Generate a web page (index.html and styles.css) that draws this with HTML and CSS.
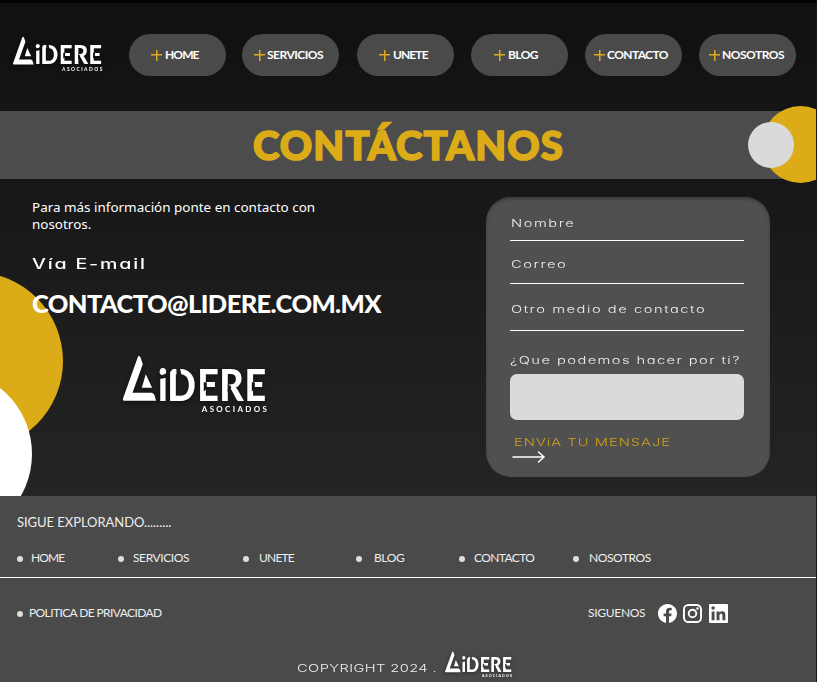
FILE: index.html
```html
<!DOCTYPE html>
<html lang="es">
<head>
<meta charset="utf-8">
<title>Lidere Asociados - Contáctanos</title>
<link rel="stylesheet" href="styles.css">
</head>
<body>
<svg class="defs" width="0" height="0" aria-hidden="true">
  <defs>
    <mask id="stencil" maskUnits="userSpaceOnUse" x="0" y="0" width="440" height="175">
      <rect width="440" height="175" fill="#fff"/>
      <path d="M144 36H160L144 54ZM165 36H175L182 64H166ZM110 66L138 54V68L120 72H110ZM248 82H257L257 102L248 110ZM320 86L331 96L327 112H320ZM393 82H402L402 102L393 110Z" fill="#000"/>
    </mask>
    <symbol id="logo" viewBox="0 0 440 175">
      <path d="M4 132L49 6Q53 0 57 7L64 28L33 114H91Q96 115 99 121L104 138H8Q2 138 4 132Z"/>
      <path d="M73 58L92 99H61Z"/>
      <g mask="url(#stencil)">
        <text class="logo-word" x="110" y="138" textLength="326" lengthAdjust="spacingAndGlyphs">i<tspan dx="-2">D</tspan><tspan dx="4">E</tspan><tspan dx="2">R</tspan><tspan dx="2">E</tspan></text>
      </g>
      <text class="logo-sub" x="242" y="171" textLength="196">ASOCIADOS</text>
    </symbol>
  </defs>
</svg>

<header class="header">
  <svg class="logo logo-header"><use href="#logo"/></svg>
  <nav class="nav">
    <a class="pill home"><i class="plus"></i><span>HOME</span></a>
    <a class="pill servicios"><i class="plus"></i><span>SERVICIOS</span></a>
    <a class="pill unete"><i class="plus"></i><span>UNETE</span></a>
    <a class="pill blog"><i class="plus"></i><span>BLOG</span></a>
    <a class="pill contacto"><i class="plus"></i><span>CONTACTO</span></a>
    <a class="pill nosotros"><i class="plus"></i><span>NOSOTROS</span></a>
  </nav>
</header>

<section class="banner">
  <h1>CONTÁCTANOS</h1>
  <div class="dot-gold"></div>
  <div class="dot-grey"></div>
</section>

<main class="main">
  <div class="circle-gold"></div>
  <div class="circle-white"></div>
  <section class="info">
    <p class="lead">Para más información ponte en contacto con<br>nosotros.</p>
    <h2 class="via"><span>Vía E-mail</span></h2>
    <p class="email">CONTACTO@LIDERE.COM.MX</p>
    <svg class="logo logo-main"><use href="#logo"/></svg>
  </section>
  <form class="card">
    <label class="field name"><span>Nombre</span></label>
    <label class="field mail"><span>Correo</span></label>
    <label class="field other"><span>Otro medio de contacto</span></label>
    <label class="question"><span>¿Que podemos hacer por ti?</span></label>
    <div class="message"></div>
    <div class="send"><span>ENVíA TU MENSAJE</span></div>
    <svg class="arrow" viewBox="0 0 32 12"><path d="M0 6H31M25.5 1L31 6L25.5 11"/></svg>
  </form>
</main>

<footer class="footer">
  <h3>SIGUE EXPLORANDO.........</h3>
  <ul class="links">
    <li class="l-home"><span>HOME</span></li>
    <li class="l-servicios"><span>SERVICIOS</span></li>
    <li class="l-unete"><span>UNETE</span></li>
    <li class="l-blog"><span>BLOG</span></li>
    <li class="l-contacto"><span>CONTACTO</span></li>
    <li class="l-nosotros"><span>NOSOTROS</span></li>
  </ul>
  <div class="bottom">
    <div class="privacy"><span>POLITICA DE PRIVACIDAD</span></div>
    <div class="social">
      <span class="follow">SIGUENOS</span>
      <svg class="fb" viewBox="2 2 20 20"><path d="M12 2.04C6.5 2.04 2 6.53 2 12.06C2 17.06 5.66 21.21 10.44 21.96V14.96H7.9V12.06H10.44V9.85C10.44 7.34 11.93 5.96 14.22 5.96C15.31 5.96 16.45 6.15 16.45 6.15V8.62H15.19C13.95 8.62 13.56 9.39 13.56 10.18V12.06H16.34L15.89 14.96H13.56V21.96A10 10 0 0 0 22 12.06C22 6.53 17.5 2.04 12 2.04Z"/></svg>
      <svg class="ig" viewBox="2 2 20 20"><path d="M7.8 2H16.2C19.4 2 22 4.6 22 7.8V16.2A5.8 5.8 0 0 1 16.2 22H7.8C4.6 22 2 19.4 2 16.2V7.8A5.8 5.8 0 0 1 7.8 2M7.6 4A3.6 3.6 0 0 0 4 7.6V16.4C4 18.39 5.61 20 7.6 20H16.4A3.6 3.6 0 0 0 20 16.4V7.6C20 5.61 18.39 4 16.4 4H7.6M17.25 5.5A1.25 1.25 0 1 1 17.25 8A1.25 1.25 0 0 1 17.25 5.5M12 7A5 5 0 1 1 12 17A5 5 0 0 1 12 7M12 9A3 3 0 1 0 12 15A3 3 0 0 0 12 9Z"/></svg>
      <svg class="in" viewBox="3 3 18 18"><path fill-rule="evenodd" d="M4 3H20A1 1 0 0 1 21 4V20A1 1 0 0 1 20 21H4A1 1 0 0 1 3 20V4A1 1 0 0 1 4 3ZM18.5 18.5V13.2A3.26 3.26 0 0 0 15.24 9.94C14.39 9.94 13.4 10.46 12.92 11.24V10.13H10.13V18.5H12.92V13.57A1.4 1.4 0 0 1 15.71 13.57V18.5H18.5M6.88 8.56A1.68 1.68 0 1 0 6.88 5.2A1.68 1.68 0 0 0 6.88 8.56M8.27 18.5V10.13H5.5V18.5H8.27Z"/></svg>
    </div>
  </div>
  <div class="copy">
    <div class="copy-text"><span>COPYRIGHT 2024 .</span></div>
    <svg class="logo logo-footer"><use href="#logo"/></svg>
  </div>
</footer>
</body>
</html>
```
FILE: styles.css
```css
* { box-sizing: border-box; margin: 0; padding: 0; }

body {
  width: 817px;
  height: 682px;
  overflow: hidden;
  color: #fff;
  font-family: Lato, "Liberation Sans", sans-serif;
  background: linear-gradient(#101010, #171717 180px, #242424 496px);
  border-top: 3px solid #020202;
  border-right: 1px solid #151515;
}

.defs { position: absolute; }
.logo { display: block; fill: #fff; flex: none; }
.logo-word { font: 900 130px Lato, sans-serif; }
.logo-sub { font: 700 24px Lato, sans-serif; }

.header { display: flex; height: 108px; padding: 31px 0 0 12px; }
.logo-header { width: 91px; height: 36px; margin-top: 2px; filter: drop-shadow(0 1px 2px #0008); }
.nav { display: flex; margin-left: 26px; }
.pill {
  display: flex;
  align-items: center;
  width: 97px;
  height: 42px;
  border-radius: 21px;
  background: #4a4a4a;
  font-size: 12px;
  font-weight: 700;
  white-space: nowrap;
}
.plus {
  flex: none;
  width: 11px;
  height: 11px;
  margin-right: 3px;
  background:
    linear-gradient(#dba91d, #dba91d) center / 11px 1.5px no-repeat,
    linear-gradient(#dba91d, #dba91d) center / 1.5px 11px no-repeat;
}
.home { padding-left: 22px; }
.servicios { margin-left: 16px; padding-left: 12px; }
.unete { margin-left: 18px; padding-left: 22px; }
.blog { margin-left: 17px; padding-left: 23px; }
.contacto { margin-left: 17px; padding-left: 9px; }
.nosotros { margin-left: 17px; padding-left: 10px; }
.pill span { padding-bottom: 2px; letter-spacing: -.6px; }
.home span, .unete span { letter-spacing: -.9px; }
.servicios span, .nosotros span { margin-left: -1px; letter-spacing: -.5px; }
.contacto span { margin-left: -1px; }

.banner { position: relative; height: 68px; background: #4c4c4c; }
.banner h1 {
  padding-left: 253px;
  color: #dcac18;
  font-size: 40px;
  font-weight: 900;
  line-height: 68px;
  letter-spacing: 1.1px;
  -webkit-text-stroke: 1.6px #dcac18;
}
.dot-gold, .dot-grey { position: absolute; border-radius: 50%; }
.dot-gold { right: -23px; top: -5px; width: 77px; height: 77px; background: #dcac18; clip-path: inset(0 23px 0 0); }
.dot-grey { left: 748px; top: 11px; width: 46px; height: 46px; background: #dadada; }

.main { position: relative; display: flex; height: 317px; overflow: hidden; }
.circle-gold, .circle-white { position: absolute; border-radius: 50%; }
.circle-gold { left: -115px; top: 93px; width: 178px; height: 178px; background: #dcac18; }
.circle-white { left: -136px; top: 191px; width: 168px; height: 168px; background: #fff; }
.info { position: relative; width: 486px; padding: 20px 0 0 32px; }
.lead { font: 13.45px/17px "Noto Sans", sans-serif; white-space: nowrap; }
.via { height: 22px; margin-top: 20px; font: 500 14px/22px Inter, sans-serif; }
.via span, .field span, .question span, .send span, .copy-text span {
  display: inline-block;
  white-space: nowrap;
  transform: scaleX(1.4);
  transform-origin: left;
  font-feature-settings: "cv11", "ss03";
}
.via span { letter-spacing: 1.3px; }
.email { margin-top: 11px; font-size: 25.5px; font-weight: 900; line-height: 34px; letter-spacing: -.62px; }
.logo-main { width: 147px; height: 58px; margin: 35px 0 0 89px; filter: drop-shadow(0 2px 3px #0008); }

.card {
  width: 284px;
  height: 280px;
  margin-top: 18px;
  padding: 0 26px 0 24px;
  border-radius: 25px;
  background: #505050;
  box-shadow: inset 0 2px 3px #3c3c3c;
  color: #f0f0f0;
  font: 300 10.5px/16px Inter, sans-serif;
}
.field { display: flex; align-items: flex-end; padding: 0 0 8px 1px; border-bottom: 1px solid #fff; }
.name { height: 44px; }
.mail { height: 43px; padding-bottom: 10px; }
.other { height: 47px; padding-bottom: 12px; }
.field span { letter-spacing: 1.1px; }
.question { display: block; height: 43px; padding-top: 22px; }
.question span { letter-spacing: 1.02px; }
.message { height: 46px; border-radius: 7px; background: #dadada; }
.send { height: 31px; padding: 15px 0 0 4px; color: #d0a01b; }
.send span { letter-spacing: .72px; }
.arrow { display: block; width: 32px; height: 12px; margin-left: 3px; fill: none; stroke: #fff; stroke-width: 1.5; stroke-linecap: round; overflow: visible; }

.footer { height: 186px; background: #4a4a4a; color: #eee; }
.footer h3 { height: 50px; padding: 17px 0 0 17px; font-size: 13px; font-weight: 400; line-height: 18px; letter-spacing: -.05px; }
.links { display: flex; height: 32px; border-bottom: 1px solid #fff; list-style: none; font-size: 12px; }
.links li, .privacy { display: flex; align-items: center; height: 25px; white-space: nowrap; letter-spacing: -.6px; }
.links li::before, .privacy::before { content: ""; flex: none; width: 6px; height: 6px; border-radius: 50%; background: #dedede; }
.links span, .privacy span { padding-bottom: 2px; }
.l-home { width: 101px; margin-left: 17px; }
.l-servicios { width: 125px; }
.l-unete { width: 113px; }
.l-blog { width: 103px; }
.l-contacto { width: 114px; }
.l-home span { margin-left: 8px; letter-spacing: -.9px; }
.l-servicios span { margin-left: 9px; letter-spacing: -.4px; }
.l-unete span { margin-left: 10px; letter-spacing: -.8px; }
.l-blog span { margin-left: 12px; letter-spacing: -.4px; }
.l-contacto span { margin-left: 9px; }
.l-nosotros span { margin-left: 10px; letter-spacing: -.4px; }
.bottom { display: flex; align-items: center; height: 71px; padding-left: 17px; font-size: 12px; }
.privacy span { margin-left: 6px; letter-spacing: -.6px; }
.social { position: relative; display: flex; align-items: center; margin-left: auto; width: 228px; }
.follow { width: 70px; padding-bottom: 2px; letter-spacing: -.3px; }
.social svg { width: 19px; height: 19px; fill: #fff; }
.ig { margin-left: 6px; }
.in { margin-left: 7px; }
.copy { display: flex; height: 33px; padding-left: 297px; }
.copy-text { width: 147px; padding-top: 12px; font: 300 10.5px/16px Inter, sans-serif; }
.copy-text span { letter-spacing: .28px; }
.logo-footer { width: 69px; height: 27px; margin-top: 2px; filter: drop-shadow(0 1px 2px #0006); }
```
